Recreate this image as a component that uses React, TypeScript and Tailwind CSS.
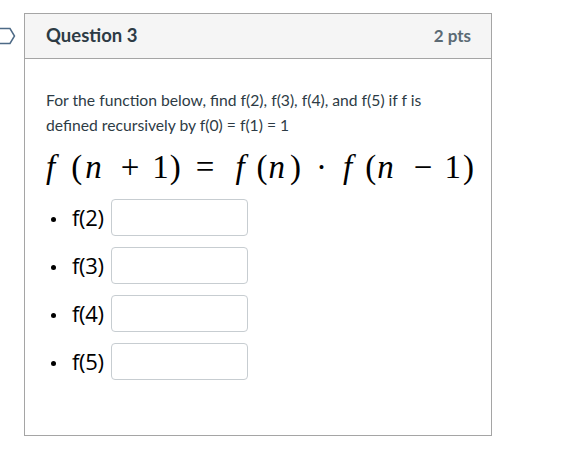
import React from "react";

const items = ["f(2)", "f(3)", "f(4)", "f(5)"];

export default function App() {
  return (
    <div className="relative w-[569px] h-[455px] bg-white">
      <svg className="absolute left-0 top-[27px]" width="16" height="18" viewBox="0 0 16 18">
        <path d="M-2 1.5 H10 L14.5 9 L10 16.5 H-2" fill="none" stroke="#4d6a86" strokeWidth="1.5" />
      </svg>
      <div className="pt-[13px] pl-[24px]">
        <div className="w-[468px] h-[423px] border border-[#a5a5a5] flex flex-col">
          <div className="h-[45px] bg-[#f5f5f5] border-b border-[#a5a5a5] flex items-center justify-between pl-[21px] pr-[20px] font-['Lato',sans-serif]">
            <span className="text-[18.5px] font-bold text-[#2d3b45]">Question 3</span>
            <span className="text-[17px] font-bold text-[#5b6a74]">2 pts</span>
          </div>
          <div className="pl-[21px] pt-[29px] font-['Lato',sans-serif]">
            <p className="text-[15.7px] leading-[25px] text-[#2d3b45]">
              For the function below, find f(2), f(3), f(4), and f(5) if f is
              <br />
              defined recursively by f(0) = f(1) = 1
            </p>
            <div className="mt-[12px] h-[34px] flex items-center text-[33px] leading-none text-black font-['Liberation_Serif',serif] whitespace-pre">
              <span className="italic">f</span>
              <span className="ml-[16px]">(</span>
              <span className="ml-[3px] italic">n</span>
              <span className="ml-[19px]">+</span>
              <span className="ml-[13px]">1</span>
              <span className="ml-[1px]">)</span>
              <span className="ml-[15px]">=</span>
              <span className="ml-[21px] italic">f</span>
              <span className="ml-[12px]">(</span>
              <span className="ml-[1px] italic">n</span>
              <span className="ml-[5px]">)</span>
              <span className="ml-[15px]">·</span>
              <span className="ml-[16px] italic">f</span>
              <span className="ml-[13px]">(</span>
              <span className="ml-[1px] italic">n</span>
              <span className="ml-[20px]">−</span>
              <span className="ml-[12px]">1</span>
              <span className="ml-[2px]">)</span>
            </div>
            <ul className="mt-[15px] flex flex-col gap-[11px] font-['Open_Sans','Liberation_Sans',sans-serif]">
              {items.map((t) => (
                <li key={t} className="flex items-center h-[37px]">
                  <span className="w-[5px] h-[5px] rounded-full bg-black ml-[5px] mr-[16px] mt-[4px]" />
                  <span className="text-[22px] text-black tracking-[-0.3px]">{t}</span>
                  <span className="ml-[7px] w-[137px] h-[37px] border border-[#c7cdd1] rounded-[4px] bg-white" />
                </li>
              ))}
            </ul>
          </div>
        </div>
      </div>
    </div>
  );
}
